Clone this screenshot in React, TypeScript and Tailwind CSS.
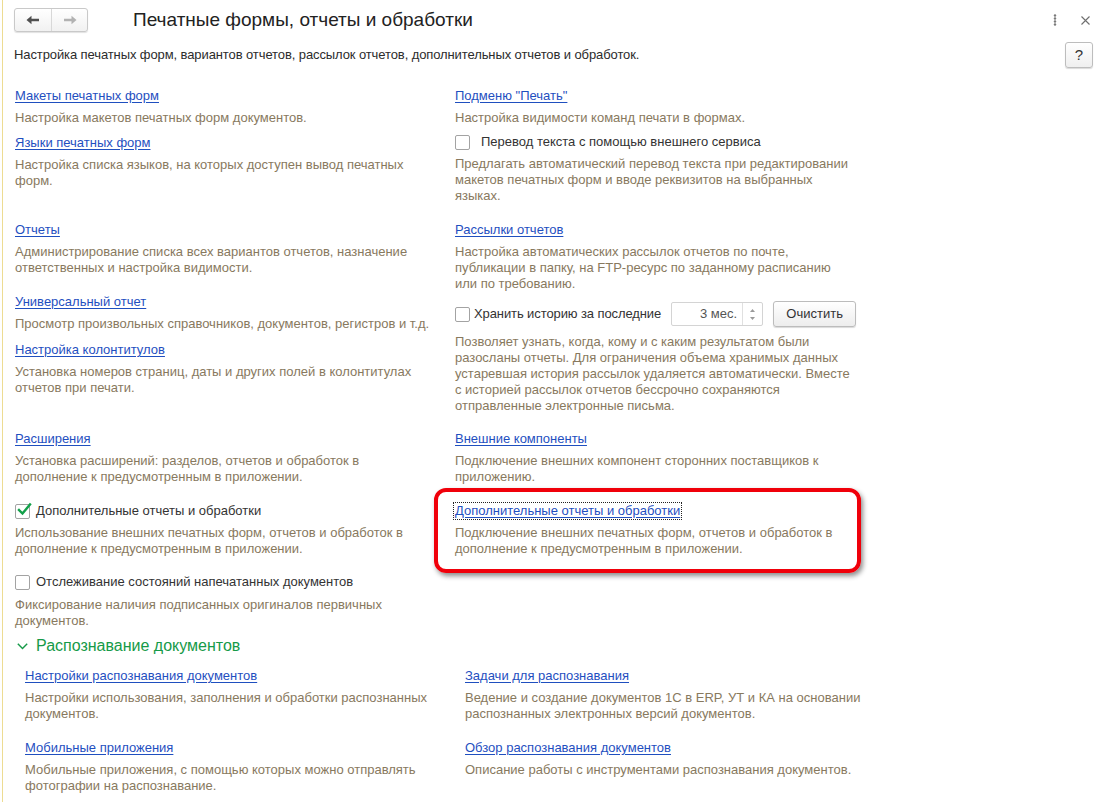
import React from "react";

const LINK = "h-4 leading-4 text-[13px] text-[#1f4fbf] underline underline-offset-[2px] decoration-[#1f4fbf] whitespace-nowrap w-fit";

function Desc({ lines, className = "" }: { lines: string[]; className?: string }) {
  return (
    <div className={"text-[13px] leading-4 text-[#88795e] " + className}>
      {lines.map((l, i) => (
        <div key={i} className="whitespace-nowrap">
          {l}
        </div>
      ))}
    </div>
  );
}

function Box({ checked = false }: { checked?: boolean }) {
  return (
    <div className="relative w-[15px] h-[15px] shrink-0 rounded-[2px] border border-[#a3a3a3] bg-white">
      {checked && (
        <svg className="absolute left-[1px] top-[-3px]" width="15" height="15" viewBox="0 0 15 15">
          <path d="M2 8 L5.5 11.5 L13 2.5" fill="none" stroke="#12a04a" strokeWidth="2.4" strokeLinecap="square" />
        </svg>
      )}
    </div>
  );
}

function LinkItem({ title, lines, mt = 0, focused = false }: { title: string; lines: string[]; mt?: number; focused?: boolean }) {
  return (
    <div style={{ marginTop: mt }}>
      <div className={LINK + (focused ? " outline outline-1 outline-dotted outline-[#222] -ml-[1px] pl-[1px] pr-[1px]" : "")}>{title}</div>
      <Desc lines={lines} className="mt-[6px]" />
    </div>
  );
}

export default function App() {
  return (
    <div className="relative w-[1101px] h-[802px] overflow-hidden bg-white font-['Liberation_Sans',Arial,sans-serif]">
      {/* window's left edge */}
      <div className="absolute left-[2px] top-0 bottom-0 w-[1px] bg-[#eddc92]" />

      {/* header */}
      <div className="flex items-center h-[24px] mt-[8px] pl-[14px] pr-[10px]">
        <div className="flex h-[24px] w-[74px] rounded-[3px] border border-[#c9c9c9] bg-gradient-to-b from-white to-[#f1f1f1] shadow-[0_1px_1px_rgba(0,0,0,0.12)]">
          <div className="flex w-[37px] items-center justify-center border-r border-[#d8d8d8]">
            <svg width="14" height="10" viewBox="0 0 14 10">
              <path d="M0.5 5 L5.5 0.8 L5.5 3.8 L13 3.8 L13 6.2 L5.5 6.2 L5.5 9.2 Z" fill="#505050" />
            </svg>
          </div>
          <div className="flex flex-1 items-center justify-center">
            <svg width="14" height="10" viewBox="0 0 14 10">
              <path d="M13.5 5 L8.5 0.8 L8.5 3.8 L1 3.8 L1 6.2 L8.5 6.2 L8.5 9.2 Z" fill="#b2b2b2" />
            </svg>
          </div>
        </div>
        <div className="ml-[45px] text-[19px] leading-6 text-[#222] whitespace-nowrap">Печатные формы, отчеты и обработки</div>
        <div className="ml-auto flex items-center">
          <svg width="4" height="12" viewBox="0 0 4 12" className="mr-[24px]">
            <circle cx="2" cy="1.5" r="1.2" fill="#7a7a7a" />
            <circle cx="2" cy="4.5" r="1.2" fill="#7a7a7a" />
            <circle cx="2" cy="7.5" r="1.2" fill="#7a7a7a" />
            <circle cx="2" cy="10.5" r="1.2" fill="#7a7a7a" />
          </svg>
          <svg width="9" height="9" viewBox="0 0 9 9" className="mr-[1px]">
            <path d="M0.5 0.5 L8.5 8.5 M8.5 0.5 L0.5 8.5" stroke="#6f6f6f" strokeWidth="1.1" />
          </svg>
        </div>
      </div>

      {/* subtitle row */}
      <div className="flex items-center h-[26px] mt-[10px] pl-[14px] pr-[8px]">
        <div className="text-[13px] leading-4 tracking-[-0.1px] text-[#2c2c2c] whitespace-nowrap">
          Настройка печатных форм, вариантов отчетов, рассылок отчетов, дополнительных отчетов и обработок.
        </div>
        <div className="ml-auto flex h-[26px] w-[28px] items-center justify-center rounded-[3px] border border-[#bdbdbd] bg-gradient-to-b from-white to-[#efefef] text-[15px] text-[#333] shadow-[0_1px_1px_rgba(0,0,0,0.15)]">
          ?
        </div>
      </div>

      {/* section: print forms */}
      <div className="flex pl-[15px] mt-[20px]">
        <div className="w-[440px]">
          <LinkItem title="Макеты печатных форм" lines={["Настройка макетов печатных форм документов."]} />
          <LinkItem
            mt={9}
            title="Языки печатных форм"
            lines={["Настройка списка языков, на которых доступен вывод печатных", "форм."]}
          />
        </div>
        <div className="flex-1">
          <LinkItem title={'Подменю "Печать"'} lines={["Настройка видимости команд печати в формах."]} />
          <div className="mt-[8px]">
            <div className="flex items-center h-4">
              <Box />
              <span className="ml-[11px] text-[13px] leading-4 text-[#333] whitespace-nowrap">Перевод текста с помощью внешнего сервиса</span>
            </div>
            <Desc
              className="mt-[6px]"
              lines={[
                "Предлагать автоматический перевод текста при редактировании",
                "макетов печатных форм и вводе реквизитов на выбранных",
                "языках.",
              ]}
            />
          </div>
        </div>
      </div>

      {/* section: reports */}
      <div className="flex pl-[15px] mt-[18px]">
        <div className="w-[440px]">
          <LinkItem
            title="Отчеты"
            lines={["Администрирование списка всех вариантов отчетов, назначение", "ответственных и настройка видимости."]}
          />
          <LinkItem
            mt={18}
            title="Универсальный отчет"
            lines={["Просмотр произвольных справочников, документов, регистров и т.д."]}
          />
          <LinkItem
            mt={10}
            title="Настройка колонтитулов"
            lines={["Установка номеров страниц, даты и других полей в колонтитулах", "отчетов при печати."]}
          />
        </div>
        <div className="flex-1">
          <LinkItem
            title="Рассылки отчетов"
            lines={[
              "Настройка автоматических рассылок отчетов по почте,",
              "публикации в папку, на FTP-ресурс по заданному расписанию",
              "или по требованию.",
            ]}
          />
          <div className="mt-[9px] flex items-center h-[26px]">
            <Box />
            <span className="ml-[4px] text-[13px] leading-4 tracking-[-0.1px] text-[#333] whitespace-nowrap">Хранить историю за последние</span>
            <div className="ml-[10px] flex h-[24px] w-[92px] rounded-[2px] border border-[#d4d4d4] bg-white">
              <div className="flex-1 pr-[5px] text-right text-[13px] leading-[22px] text-[#555]">3 мес.</div>
              <div className="flex w-[20px] flex-col items-center justify-center gap-[5px] border-l border-[#e0e0e0]">
                <svg width="5" height="3" viewBox="0 0 5 3">
                  <path d="M0 3 L2.5 0 L5 3 Z" fill="#9a9a9a" />
                </svg>
                <svg width="5" height="3" viewBox="0 0 5 3">
                  <path d="M0 0 L2.5 3 L5 0 Z" fill="#9a9a9a" />
                </svg>
              </div>
            </div>
            <div className="ml-[10px] flex h-[26px] w-[83px] items-center justify-center rounded-[3px] border border-[#bcbcbc] bg-gradient-to-b from-white to-[#ededed] text-[13px] text-[#333] shadow-[0_1px_1px_rgba(0,0,0,0.15)]">
              Очистить
            </div>
          </div>
          <Desc
            className="mt-[7px]"
            lines={[
              "Позволяет узнать, когда, кому и с каким результатом были",
              "разосланы отчеты. Для ограничения объема хранимых данных",
              "устаревшая история рассылок удаляется автоматически. Вместе",
              "с историей рассылок отчетов бессрочно сохраняются",
              "отправленные электронные письма.",
            ]}
          />
        </div>
      </div>

      {/* section: extensions and additional processing */}
      <div className="flex pl-[15px] mt-[17px]">
        <div className="w-[440px]">
          <LinkItem
            title="Расширения"
            lines={["Установка расширений: разделов, отчетов и обработок в", "дополнение к предусмотренным в приложении."]}
          />
          <div className="mt-[18px]">
            <div className="flex items-center h-4">
              <Box checked />
              <span className="ml-[6px] text-[13px] leading-4 text-[#333] whitespace-nowrap">Дополнительные отчеты и обработки</span>
            </div>
            <Desc
              className="mt-[6px]"
              lines={["Использование внешних печатных форм, отчетов и обработок в", "дополнение к предусмотренным в приложении."]}
            />
          </div>
          <div className="mt-[17px]">
            <div className="flex items-center h-4">
              <Box />
              <span className="ml-[6px] text-[13px] leading-4 text-[#333] whitespace-nowrap">Отслеживание состояний напечатанных документов</span>
            </div>
            <Desc className="mt-[7px]" lines={["Фиксирование наличия подписанных оригиналов первичных", "документов."]} />
          </div>
        </div>
        <div className="flex-1">
          <LinkItem
            title="Внешние компоненты"
            lines={["Подключение внешних компонент сторонних поставщиков к", "приложению."]}
          />
          <div className="relative mt-[18px]">
            <LinkItem
              focused
              title="Дополнительные отчеты и обработки"
              lines={["Подключение внешних печатных форм, отчетов и обработок в", "дополнение к предусмотренным в приложении."]}
            />
            <div className="pointer-events-none absolute left-[-21px] top-[-15px] h-[85px] w-[427px] rounded-[12px] border-[4px] border-[#f0000a] shadow-[2px_3px_5px_rgba(0,0,0,0.45)]" />
          </div>
        </div>
      </div>

      {/* group: document recognition */}
      <div className="mt-[7px] flex items-center h-5 pl-[17px]">
        <svg width="11" height="7" viewBox="0 0 11 7">
          <path d="M0.8 0.8 L5.5 5.6 L10.2 0.8" fill="none" stroke="#169a48" strokeWidth="1.4" />
        </svg>
        <span className="ml-[8px] text-[16px] leading-5 text-[#169a48] whitespace-nowrap">Распознавание документов</span>
      </div>

      <div className="flex pl-[25px] mt-[12px]">
        <div className="w-[440px]">
          <LinkItem
            title="Настройки распознавания документов"
            lines={["Настройки использования, заполнения и обработки распознанных", "документов."]}
          />
          <LinkItem
            mt={18}
            title="Мобильные приложения"
            lines={["Мобильные приложения, с помощью которых можно отправлять", "фотографии на распознавание."]}
          />
        </div>
        <div className="flex-1">
          <LinkItem
            title="Задачи для распознавания"
            lines={["Ведение и создание документов 1С в ERP, УТ и КА на основании", "распознанных электронных версий документов."]}
          />
          <LinkItem
            mt={18}
            title="Обзор распознавания документов"
            lines={["Описание работы с инструментами распознавания документов."]}
          />
        </div>
      </div>
    </div>
  );
}
